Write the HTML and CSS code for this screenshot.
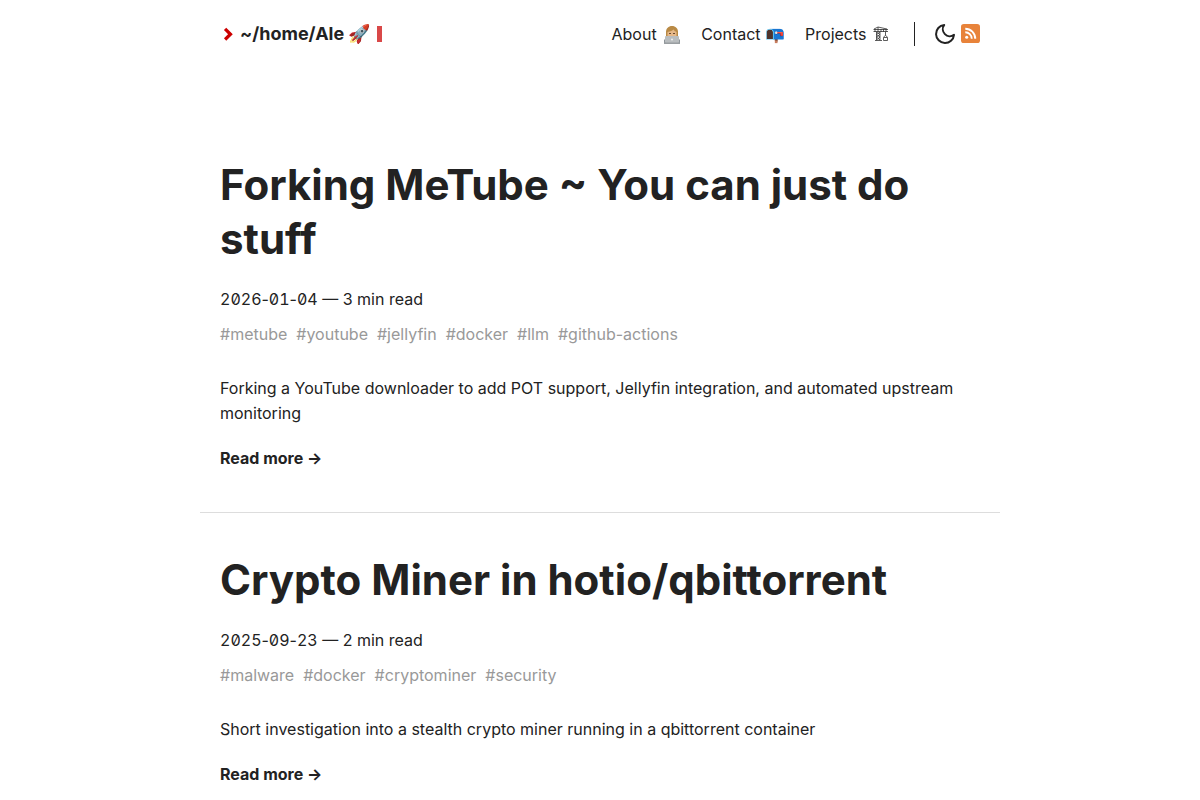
FILE: index.html
```html
<!DOCTYPE html>
<html lang="en">
<head>
  <meta charset="UTF-8">
  <meta name="viewport" content="width=device-width, initial-scale=1">
  <title>~/home/Ale</title>
  <link rel="stylesheet" href="styles.css">
</head>
<body>
  <header class="header">
    <a class="logo" href="/">
      <svg class="logo-mark" viewBox="0 0 44 44" aria-hidden="true"><path d="M14 8l14.7 14.7L14 37" fill="none" stroke="currentColor" stroke-width="9"/></svg>
      <span class="logo-text">~/home/Ale 🚀</span>
      <span class="logo-cursor"></span>
    </a>
    <nav class="menu">
      <ul class="menu-list">
        <li>
          <a href="/about">About
            <svg class="menu-icon" viewBox="0 0 18 18" aria-hidden="true">
              <path d="M3 10V6C3 2.500 5.500 0 9 0s6 2.500 6 6v4z" fill="#b98a45"/>
              <path d="M4.500 6c3-.5 5-1.500 6-2.500 1 1.500 2 2 3 2.500v5h-9z" fill="#e6b888"/>
              <path d="M6 7.500h2M10 7.500h2" stroke="#69482f" stroke-width="1"/>
              <path d="M1 18v-4l2-2h12l2 2v4z" fill="#8d9499"/>
              <rect x="2" y="10" width="14" height="7" rx="1" fill="#b9bdbf"/>
              <rect x="1" y="16.500" width="16" height="1.500" fill="#999ea1"/>
              <circle cx="9" cy="13.500" r="1" fill="#eee"/>
            </svg>
          </a>
        </li>
        <li><a href="/contact">Contact 📭</a></li>
        <li>
          <a href="/projects">Projects
            <svg class="menu-icon crane-icon" viewBox="0 0 16 16" aria-hidden="true">
              <path d="M.5 3.500h14.500M.5 5.500h14.500M1 3l4-2 9 2M2 3v3M5 1v5M8 3v3M10.500 3v3M13 3v3M3.500 6v8M7 6v8M3.500 6L7 8.500 3.500 11 7 14M7 6L3.500 8.500 7 11l-3.500 3M2 14.500h7M12.500 6v3.500M10.500 11l2-1.500 2 1.500M10.500 11.500h4v3h-4z" fill="none" stroke="#333" stroke-width=".8"/>
            </svg>
          </a>
        </li>
      </ul>
      <div class="menu-tools">
        <button class="theme-toggle" type="button" aria-label="Toggle theme">
          <svg viewBox="0 0 24 24"><path d="M21 12.79A9 9 0 1 1 11.21 3 7 7 0 0 0 21 12.79z" fill="none" stroke="currentColor" stroke-width="2" stroke-linejoin="round"/></svg>
        </button>
        <a class="rss" href="/index.xml" aria-label="RSS">
          <svg viewBox="0 0 20 20"><rect width="20" height="20" rx="3" fill="#e8833a"/><circle cx="6" cy="14" r="1.6" fill="#fff"/><path d="M4.5 8.7a6.8 6.8 0 0 1 6.8 6.8M4.5 5a10.5 10.5 0 0 1 10.5 10.5" fill="none" stroke="#fff" stroke-width="2"/></svg>
        </a>
      </div>
    </nav>
  </header>

  <main class="content">
    <article class="post">
      <h1 class="post-title"><a href="/posts/metube">Forking MeTube ~ You can just do stuff</a></h1>
      <div class="post-meta"><time class="post-date" datetime="2026-01-04"><span>2026</span>-<span>01</span>-<span>04</span></time> — 3 min read</div>
      <div class="post-tags"><a href="#">#metube</a><a href="#">#youtube</a><a href="#">#jellyfin</a><a href="#">#docker</a><a href="#">#llm</a><a href="#">#github-actions</a></div>
      <p class="post-summary">Forking a YouTube downloader to add POT support, Jellyfin integration, and automated upstream monitoring</p>
      <a class="read-more" href="/posts/metube">Read more →</a>
    </article>
    <article class="post">
      <h1 class="post-title"><a href="/posts/miner">Crypto Miner in hotio/qbittorrent</a></h1>
      <div class="post-meta"><time class="post-date" datetime="2025-09-23"><span>2025</span>-<span>09</span>-<span>23</span></time> — 2 min read</div>
      <div class="post-tags"><a href="#">#malware</a><a href="#">#docker</a><a href="#">#cryptominer</a><a href="#">#security</a></div>
      <p class="post-summary">Short investigation into a stealth crypto miner running in a qbittorrent container</p>
      <a class="read-more" href="/posts/miner">Read more →</a>
    </article>
  </main>
</body>
</html>
```
FILE: styles.css
```css
* {
  box-sizing: border-box;
}

body {
  margin: 0;
  font-family: Inter, "Noto Sans", sans-serif;
  font-size: 16px;
  line-height: 25px;
  color: #222;
  background: #fff;
}

a {
  color: inherit;
  text-decoration: none;
}

.header {
  display: flex;
  align-items: center;
  justify-content: space-between;
  max-width: 800px;
  margin: 0 auto;
  padding: 20px;
}

.logo {
  display: flex;
  align-items: center;
  font-size: 18px;
  font-weight: 700;
}

.logo-mark {
  width: 16px;
  height: 16px;
  margin-right: 4px;
  color: #c00;
}

.logo-cursor {
  width: 5px;
  height: 16px;
  margin-left: 7px;
  background: #d94848;
}

.menu,
.menu-list,
.menu-tools {
  display: flex;
  align-items: center;
}

.menu-list {
  gap: 20px;
  margin: 0;
  padding: 2px 0 0;
  list-style: none;
}

.menu-icon {
  width: 18px;
  height: 18px;
  margin-left: 2px;
  vertical-align: -4px;
}

.crane-icon {
  width: 16px;
  height: 16px;
  vertical-align: -2px;
}

.menu-tools {
  gap: 4px;
  height: 24px;
  margin-left: 25px;
  padding-left: 18px;
  border-left: 1px solid #222;
}

.theme-toggle {
  width: 24px;
  height: 24px;
  padding: 0;
  border: 0;
  color: inherit;
  background: none;
  cursor: pointer;
}

.theme-toggle svg,
.rss svg {
  display: block;
  width: 100%;
}

.rss {
  width: 19px;
}

.content {
  max-width: 800px;
  margin: 71px auto 0;
}

.post {
  padding: 20px 20px 41px;
  border-bottom: 1px solid #ddd;
}

.post + .post {
  padding-top: 40px;
}

.post-title {
  margin: 0 0 21px;
  font-size: 42px;
  line-height: 54px;
}

/* fixed-width digits, hyphens keep their normal width */
.post-date span {
  font-variant-numeric: tabular-nums slashed-zero;
}

.post-tags {
  display: flex;
  gap: 9px;
  margin-top: 10px;
  color: #999;
}

.post-summary {
  margin: 29px 0 20px;
}

.read-more {
  display: inline-block;
  font-weight: 700;
}
```
